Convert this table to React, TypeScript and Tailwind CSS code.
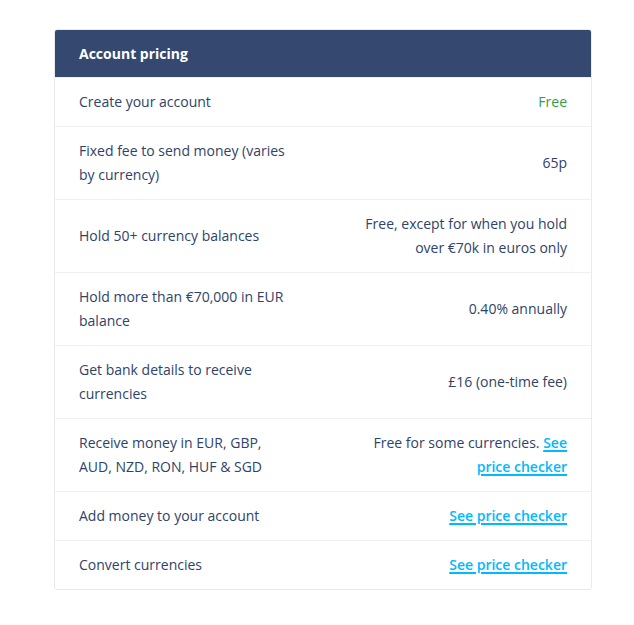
import React from "react"

type Row = {
  label: string
  value: React.ReactNode
}

const Link = ({ children }: { children: React.ReactNode }) => (
  <a href="#" className="font-semibold text-[#00b9ff] underline decoration-[1.5px] underline-offset-2">
    {children}
  </a>
)

const ROWS: Row[] = [
  { label: "Create your account", value: <span className="text-[#2e9e48]">Free</span> },
  { label: "Fixed fee to send money (varies by currency)", value: "65p" },
  { label: "Hold 50+ currency balances", value: "Free, except for when you hold over €70k in euros only" },
  { label: "Hold more than €70,000 in EUR balance", value: "0.40% annually" },
  { label: "Get bank details to receive currencies", value: "£16 (one-time fee)" },
  {
    label: "Receive money in EUR, GBP, AUD, NZD, RON, HUF & SGD",
    value: (
      <>
        Free for some currencies. <Link>See price checker</Link>
      </>
    ),
  },
  { label: "Add money to your account", value: <Link>See price checker</Link> },
  { label: "Convert currencies", value: <Link>See price checker</Link> },
]

export default function App() {
  return (
    <div className="min-h-screen bg-white pt-[29px] pl-[54px] font-['Open_Sans',sans-serif] text-[14px] leading-6 text-[#2e4369]">
      <div className="w-[538px] overflow-hidden rounded-[3px] border border-[#e8ebee]">
        <div className="flex h-[47px] items-center bg-[#344870] px-6 font-bold text-white">Account pricing</div>
        {ROWS.map((row) => (
          <div key={row.label} className="flex items-center justify-between border-t border-[#eef0f2] px-6 py-3">
            <div className="w-[218px]">{row.label}</div>
            <div className="w-[212px] text-right">{row.value}</div>
          </div>
        ))}
      </div>
    </div>
  )
}
